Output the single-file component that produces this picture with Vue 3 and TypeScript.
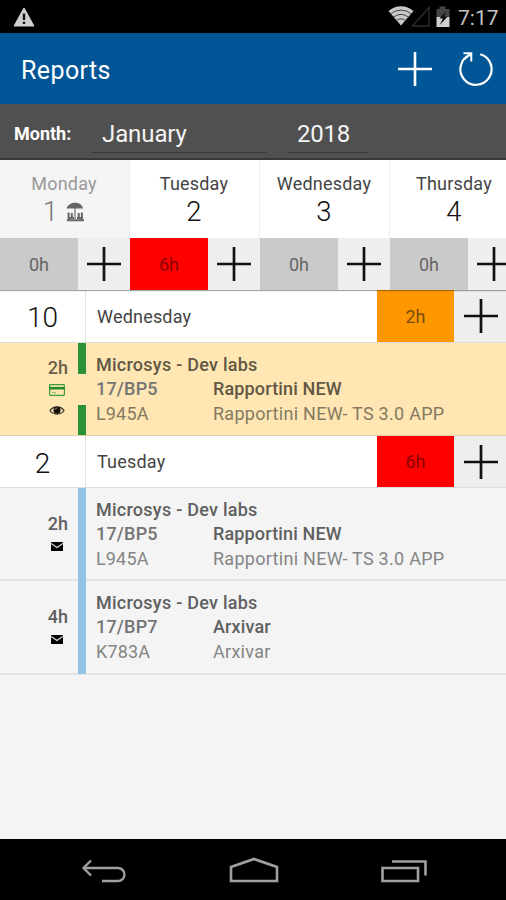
<script setup lang="ts">
interface Day {
  name: string
  num: number
  hours: string
  holiday?: boolean
  over?: boolean
}
interface Entry {
  hours: string
  kind: 'pending' | 'sent'
  client: string
  code: string
  project: string
  task: string
  detail: string
}
interface Group {
  num: number
  name: string
  hours: string
  tone: 'orange' | 'red'
  entries: Entry[]
}

const days: Day[] = [
  { name: 'Monday', num: 1, hours: '0h', holiday: true },
  { name: 'Tuesday', num: 2, hours: '6h', over: true },
  { name: 'Wednesday', num: 3, hours: '0h' },
  { name: 'Thursday', num: 4, hours: '0h' },
]

const groups: Group[] = [
  {
    num: 10, name: 'Wednesday', hours: '2h', tone: 'orange',
    entries: [
      { hours: '2h', kind: 'pending', client: 'Microsys - Dev labs', code: '17/BP5', project: 'Rapportini NEW', task: 'L945A', detail: 'Rapportini NEW- TS 3.0 APP' },
    ],
  },
  {
    num: 2, name: 'Tuesday', hours: '6h', tone: 'red',
    entries: [
      { hours: '2h', kind: 'sent', client: 'Microsys - Dev labs', code: '17/BP5', project: 'Rapportini NEW', task: 'L945A', detail: 'Rapportini NEW- TS 3.0 APP' },
      { hours: '4h', kind: 'sent', client: 'Microsys - Dev labs', code: '17/BP7', project: 'Arxivar', task: 'K783A', detail: 'Arxivar' },
    ],
  },
]
</script>

<template>
  <div class="screen">
    <div class="status">
      <svg class="warn" width="22" height="20" viewBox="0 0 22 20">
        <path d="M11 1 L21 19 H1 Z" fill="#d0d0d0" stroke="#d0d0d0" stroke-linejoin="round" />
        <path d="M11 6.5 V13 M11 14.8 V17" stroke="#111" stroke-width="2.4" />
      </svg>
      <svg class="signals" width="64" height="24" viewBox="0 0 64 24">
        <path d="M13 21.5 L0.5 7 A19 19 0 0 1 25.500 7 Z" fill="#c8c8c8" />
        <path d="M2.500 10 A16 16 0 0 1 23.500 10 M5.200 13.300 A12 12 0 0 1 20.800 13.300 M8.200 16.600 A7.500 7.500 0 0 1 17.800 16.600" fill="none" stroke="#333" stroke-width="0.900" />
        <path d="M24.500 22 H41 V3.500 Z" fill="none" stroke="#2e2e2e" stroke-width="1.300" />
        <path d="M51.500 2.500 H57.500 V5 H61.500 V13 H48.500 V5 H51.500 Z" fill="#454545" />
        <path d="M48.500 13 H61.500 V23 H48.500 Z" fill="#cfcfcf" />
        <path d="M58.500 7 L51.500 14.500 H55 L51.700 21 L59.500 12.800 H55.500 Z" fill="#080808" />
      </svg>
      <span class="clock">7:17</span>
    </div>

    <header class="appbar">
      <h1 class="title">Reports</h1>
      <svg class="add" width="36" height="36" viewBox="0 0 36 36">
        <path d="M18 1 V35 M1 18 H35" stroke="#fff" stroke-width="2.600" />
      </svg>
      <svg class="reload" width="36" height="36" viewBox="0 0 36 36">
        <path d="M22.300 3.200 A15.600 15.600 0 1 1 12 3.800" fill="none" stroke="#fff" stroke-width="2.200" />
        <path d="M5.500 2.200 H13.300 V10.500 M13.300 2.200 L6 8.500" fill="none" stroke="#fff" stroke-width="2" />
      </svg>
    </header>

    <div class="filter">
      <span class="filter-label">Month:</span>
      <span class="field month">January</span>
      <span class="field year">2018</span>
    </div>

    <div class="week">
      <div v-for="d in days" :key="d.num" class="day" :class="{ holiday: d.holiday }">
        <div class="day-head">
          <span class="day-name">{{ d.name }}</span>
          <div class="day-num">
            <span>{{ d.num }}</span>
            <svg v-if="d.holiday" class="beach" width="19" height="20" viewBox="0 0 19 20">
              <path d="M0.500 6.500 C2 2.500 5.500 0.800 9 0.800 C13 0.800 16 2.500 17 6.500 Z" fill="#666" />
              <path d="M9 6 V17" stroke="#777" stroke-width="1.300" />
              <path d="M2.600 10.500 V18 M5.800 11 V15.500 M15.900 10.500 V18 M12.700 11 V15.500 M1 18.300 H18 M3 16 H8 M11 16 H16" fill="none" stroke="#666" stroke-width="2" />
            </svg>
          </div>
        </div>
        <div class="day-foot">
          <span class="hours" :class="{ red: d.over }">{{ d.hours }}</span>
          <span class="plus">
            <svg width="34" height="34" viewBox="0 0 34 34"><path d="M17 0 V34 M0 17 H34" stroke="#111" stroke-width="2.700" /></svg>
          </span>
        </div>
      </div>
    </div>

    <main class="list">
      <section v-for="g in groups" :key="g.num">
        <div class="group-row">
          <span class="group-num">{{ g.num }}</span>
          <span class="group-name">{{ g.name }}</span>
          <span class="hours" :class="g.tone">{{ g.hours }}</span>
          <span class="plus">
            <svg width="34" height="34" viewBox="0 0 34 34"><path d="M17 0 V34 M0 17 H34" stroke="#111" stroke-width="2.700" /></svg>
          </span>
        </div>
        <article v-for="(e, i) in g.entries" :key="i" class="entry" :class="e.kind">
          <div class="meta">
            <span class="meta-hours">{{ e.hours }}</span>
            <template v-if="e.kind === 'pending'">
              <svg class="card" width="16" height="12" viewBox="0 0 16 12">
                <rect x="0.600" y="0.600" width="14.800" height="10.800" rx="0.800" fill="none" stroke="#3c9a3c" stroke-width="1.200" />
                <path d="M0.500 4.200 H15.500" stroke="#238a2b" stroke-width="2.600" />
                <path d="M3 8.800 H7" stroke="#7fb86a" stroke-width="1" />
              </svg>
              <svg class="eye" width="16" height="11" viewBox="0 0 16 11">
                <path d="M1 5.500 C4 0.800 12 0.800 15 5.500 C12 10.200 4 10.200 1 5.500 Z" fill="#fbe7bb" stroke="#3a3424" stroke-width="1.300" />
                <circle cx="8" cy="5.200" r="3.500" fill="#15120b" />
                <path d="M6.300 4.600 A1.800 1.800 0 0 1 8 3" fill="none" stroke="#cfc09a" stroke-width="0.800" />
              </svg>
            </template>
            <svg v-else class="mail" width="12" height="9" viewBox="0 0 12 9">
              <rect width="12" height="9" rx="0.500" fill="#000" />
              <path d="M0.300 1.600 L6 5.500 L11.700 1.600" fill="none" stroke="#ddd" stroke-width="1.200" />
            </svg>
          </div>
          <div class="stripe"></div>
          <div class="info">
            <span class="client">{{ e.client }}</span>
            <span class="code">{{ e.code }}</span>
            <span class="project">{{ e.project }}</span>
            <span class="task">{{ e.task }}</span>
            <span class="detail">{{ e.detail }}</span>
          </div>
        </article>
      </section>
    </main>

    <nav class="navbar">
      <svg width="46" height="28" viewBox="0 0 46 28">
        <path d="M10 3.500 L2.500 11 L10 18.500 M3 11 H37 A6.500 6.500 0 0 1 37 24 H21" fill="none" stroke="#a0a0a0" stroke-width="2.400" />
      </svg>
      <svg width="50" height="28" viewBox="0 0 50 28">
        <path d="M2 24 V10 L25 2 L48 10 V24 Z" fill="none" stroke="#a0a0a0" stroke-width="2.600" />
      </svg>
      <svg width="46" height="28" viewBox="0 0 46 28">
        <path d="M1.500 11 H37 V24 H1.500 Z M11 4.500 H44.500 V18.500" fill="none" stroke="#a0a0a0" stroke-width="2.600" />
      </svg>
    </nav>
  </div>
</template>

<style>
body {
  margin: 0;
  overflow: hidden;
}
</style>

<style scoped>
.screen {
  width: 506px;
  height: 900px;
  display: flex;
  flex-direction: column;
  overflow: hidden;
  background: #f4f4f4;
  font-family: Roboto, "Liberation Sans", sans-serif;
  color: #444;
}
.status {
  height: 33px;
  flex: none;
  display: flex;
  align-items: center;
  background: #000;
}
.warn {
  margin-left: 13px;
}
.signals {
  margin: -2px 0 0 353px;
}
.clock {
  margin: 2px 0 0 6px;
  font-size: 21px;
  color: #c4c4c4;
}
.appbar {
  height: 71px;
  flex: none;
  display: flex;
  align-items: center;
  background: #015697;
  color: #fff;
}
.title {
  margin: 0 auto 0 21px;
  padding-top: 4px;
  font-size: 25px;
  font-weight: 400;
  line-height: 30px;
  letter-spacing: 0.4px;
}
.add {
  margin-right: 25px;
}
.reload {
  margin-right: 12px;
}
.filter {
  box-sizing: border-box;
  height: 56px;
  flex: none;
  display: flex;
  align-items: center;
  background: #505050;
  border-bottom: 2px solid #383838;
  color: #f4f4f4;
}
.filter-label {
  width: 78px;
  padding: 4px 0 0 14px;
  font-size: 18px;
  font-weight: 700;
  color: #fff;
}
.field {
  box-sizing: border-box;
  height: 36px;
  margin-top: 8px;
  padding-left: 10px;
  border-bottom: 1px solid #393939;
  font-size: 24px;
  line-height: 34px;
}
.month {
  width: 175px;
  letter-spacing: -0.1px;
}
.year {
  width: 82px;
  margin-left: 20px;
  letter-spacing: -0.2px;
}
.week {
  display: flex;
  flex: none;
  width: 520px;
  height: 130px;
  position: relative;
  box-shadow: 0 1px 1px rgba(0, 0, 0, 0.35);
}
.day {
  width: 130px;
  background: #fff;
}
.day-head {
  box-sizing: border-box;
  height: 78px;
  padding-top: 13px;
  border-right: 1px solid #eee;
  display: flex;
  flex-direction: column;
  align-items: center;
}
.day-name {
  margin-left: -1px;
  font-size: 18px;
  line-height: 22px;
  letter-spacing: 0.2px;
}
.day-num {
  display: flex;
  align-items: center;
  margin: 1px 0 0 -1px;
  font-size: 27.500px;
  font-weight: 300;
  line-height: 32px;
  color: #111;
}
.holiday .day-head {
  background: #f5f5f5;
  color: #999;
}
.holiday .day-num {
  color: #777;
}
.beach {
  margin-left: 8px;
}
.day-foot {
  display: flex;
}
.hours {
  width: 78px;
  height: 52px;
  display: flex;
  align-items: center;
  justify-content: center;
  background: #cacaca;
  font-size: 18px;
  color: #666;
}
.plus {
  flex: none;
  width: 52px;
  height: 52px;
  display: flex;
  align-items: center;
  justify-content: center;
  background: #eee;
}
.hours.red {
  background: #f00;
  color: #8c0000;
}
.hours.orange {
  background: #ff9800;
  color: #7a4c0c;
}
.list {
  flex: 1;
}
.group-row {
  box-sizing: border-box;
  height: 53px;
  display: flex;
  align-items: center;
  overflow: hidden;
  background: #fff;
  border-bottom: 1px solid #ddd;
}
section + section .group-row {
  height: 52px;
}
.group-num {
  box-sizing: border-box;
  width: 86px;
  height: 52px;
  border-right: 1px solid #e2e2e2;
  font-size: 28px;
  font-weight: 300;
  line-height: 55px;
  text-align: center;
  color: #111;
}
.group-name {
  flex: 1;
  padding-left: 11px;
  font-size: 18px;
  letter-spacing: 0.2px;
}
.group-row .hours {
  width: 77px;
}
.group-row .plus {
  box-sizing: border-box;
  padding-left: 2px;
}
.entry {
  box-sizing: border-box;
  height: 93px;
  display: flex;
  border-bottom: 2px solid #e3e3e3;
}
.entry.pending {
  background: #ffe6b3;
  border-bottom: 1px solid #dccfae;
}
.entry.sent + .entry.sent {
  height: 94px;
}
.meta {
  width: 78px;
  padding-top: 25px;
  display: flex;
  flex-direction: column;
  box-sizing: border-box;
}
.pending .meta {
  padding-top: 14px;
}
.meta-hours {
  padding-right: 10px;
  text-align: right;
  font-size: 18px;
  font-weight: 500;
  line-height: 22px;
  color: #606060;
}
.pending .meta-hours {
  color: #6b6049;
}
.card {
  margin: 5px 0 0 49px;
}
.eye {
  margin: 9px 0 0 49px;
}
.mail {
  margin: 7px 0 0 51px;
}
.stripe {
  width: 8px;
  background: #93c4e6;
}
.sent .stripe {
  height: 93px;
}
.pending .stripe {
  background: linear-gradient(#2b9136 0 31px, transparent 31px 62px, #2b9136 62px);
}
.info {
  display: grid;
  grid-template-columns: 117px 1fr;
  grid-auto-rows: 24.300px;
  align-content: start;
  padding: 10px 0 0 10px;
  font-size: 18px;
  line-height: 24px;
  white-space: nowrap;
  color: #858585;
}
.client {
  grid-column: 1 / 3;
  letter-spacing: 0.250px;
}
.client,
.code,
.project {
  font-weight: 500;
  color: #606060;
}
.code {
  color: #747474;
  letter-spacing: 0.200px;
}
.project {
  letter-spacing: 0.150px;
}
.task {
  letter-spacing: 0.150px;
}
.detail {
  letter-spacing: 0.280px;
}
.pending .client,
.pending .project {
  color: #615845;
}
.pending .info {
  color: #857a62;
}
.navbar {
  box-sizing: border-box;
  height: 61px;
  flex: none;
  display: flex;
  align-items: center;
  justify-content: center;
  gap: 102px;
  padding: 2px 0 0 2px;
  background: #000;
}
</style>
